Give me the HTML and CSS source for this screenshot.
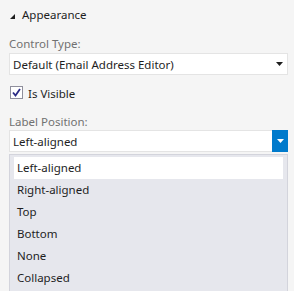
FILE: index.html
```html
<!DOCTYPE html>
<html lang="en">
<head>
    <meta charset="UTF-8">
    <title>Properties</title>
    <link rel="stylesheet" href="styles.css">
</head>
<body>
    <div class="panel">
        <div class="section-head">
            <svg class="caret" width="5" height="5" viewBox="0 0 5 5"><polygon points="5,0 5,5 0,5" fill="#1e1e1e"/></svg>
            <span>Appearance</span>
        </div>

        <div class="field-label first">Control Type:</div>
        <div class="combo">
            <span class="combo-text">Default (Email Address Editor)</span>
            <svg class="combo-arrow" width="7" height="4" viewBox="0 0 7 4"><polygon points="0,0 7,0 3.5,4" fill="#1e1e1e"/></svg>
        </div>

        <label class="check">
            <span class="check-box">
                <svg width="9" height="9" viewBox="0 0 9 9"><path d="M1 4.5 L3.5 7.5 L8 1" fill="none" stroke="#2c2c86" stroke-width="1.8"/></svg>
            </span>
            <span>Is Visible</span>
        </label>

        <div class="field-label">Label Position:</div>
        <div class="combo open">
            <span class="combo-text">Left-aligned</span>
            <span class="combo-btn">
                <svg width="7" height="4" viewBox="0 0 7 4"><polygon points="0,0 7,0 3.5,4" fill="#ffffff"/></svg>
            </span>
        </div>
        <ul class="options">
            <li class="selected">Left-aligned</li>
            <li>Right-aligned</li>
            <li>Top</li>
            <li>Bottom</li>
            <li>None</li>
            <li>Collapsed</li>
        </ul>
    </div>
</body>
</html>
```

FILE: styles.css
```css
body {
    margin: 0;
    padding: 0;
    background: #f5f5f5;
    font-family: "Noto Sans", "Open Sans", sans-serif;
    font-size: 11.5px;
    color: #1e1e1e;
    overflow: hidden;
}

.panel {
    padding: 6px 6px 0 9px;
    height: 291px;
    box-sizing: border-box;
}

.section-head {
    display: flex;
    align-items: center;
    height: 18px;
    line-height: 18px;
}

.caret {
    margin: 3px 7px 0 1px;
}

.field-label {
    color: #717171;
    height: 16px;
    line-height: 16px;
    margin-top: 13px;
    margin-bottom: 0;
}

.field-label.first {
    margin-top: 12px;
    margin-bottom: 1px;
}

.combo {
    display: flex;
    align-items: center;
    height: 22px;
    box-sizing: border-box;
    background: #ffffff;
    border: 1px solid #e4e4e4;
}

.combo-text {
    flex: 1;
    padding-left: 3px;
}

.combo-arrow {
    margin-right: 4px;
}

.combo.open {
    border-right: none;
}

.combo-btn {
    display: flex;
    align-items: center;
    justify-content: center;
    width: 16px;
    height: 22px;
    margin-top: -1px;
    margin-bottom: -1px;
    background: #007acc;
}

.check {
    display: flex;
    align-items: center;
    height: 16px;
    margin-top: 10px;
}

.check-box {
    display: flex;
    align-items: center;
    justify-content: center;
    width: 11px;
    height: 11px;
    margin: -2px 5px 0 1px;
    background: #ffffff;
    border: 1px solid #8f8f9c;
}

.options {
    list-style: none;
    margin: 2px 0 0 0;
    padding: 2px 4px 0 4px;
    height: 140px;
    background: #e6e7ed;
    border: 1px solid #d3d4dc;
    border-bottom: none;
}

.options li {
    height: 22px;
    line-height: 22px;
    padding-left: 3px;
}

.options li.selected {
    background: #ffffff;
}
```
